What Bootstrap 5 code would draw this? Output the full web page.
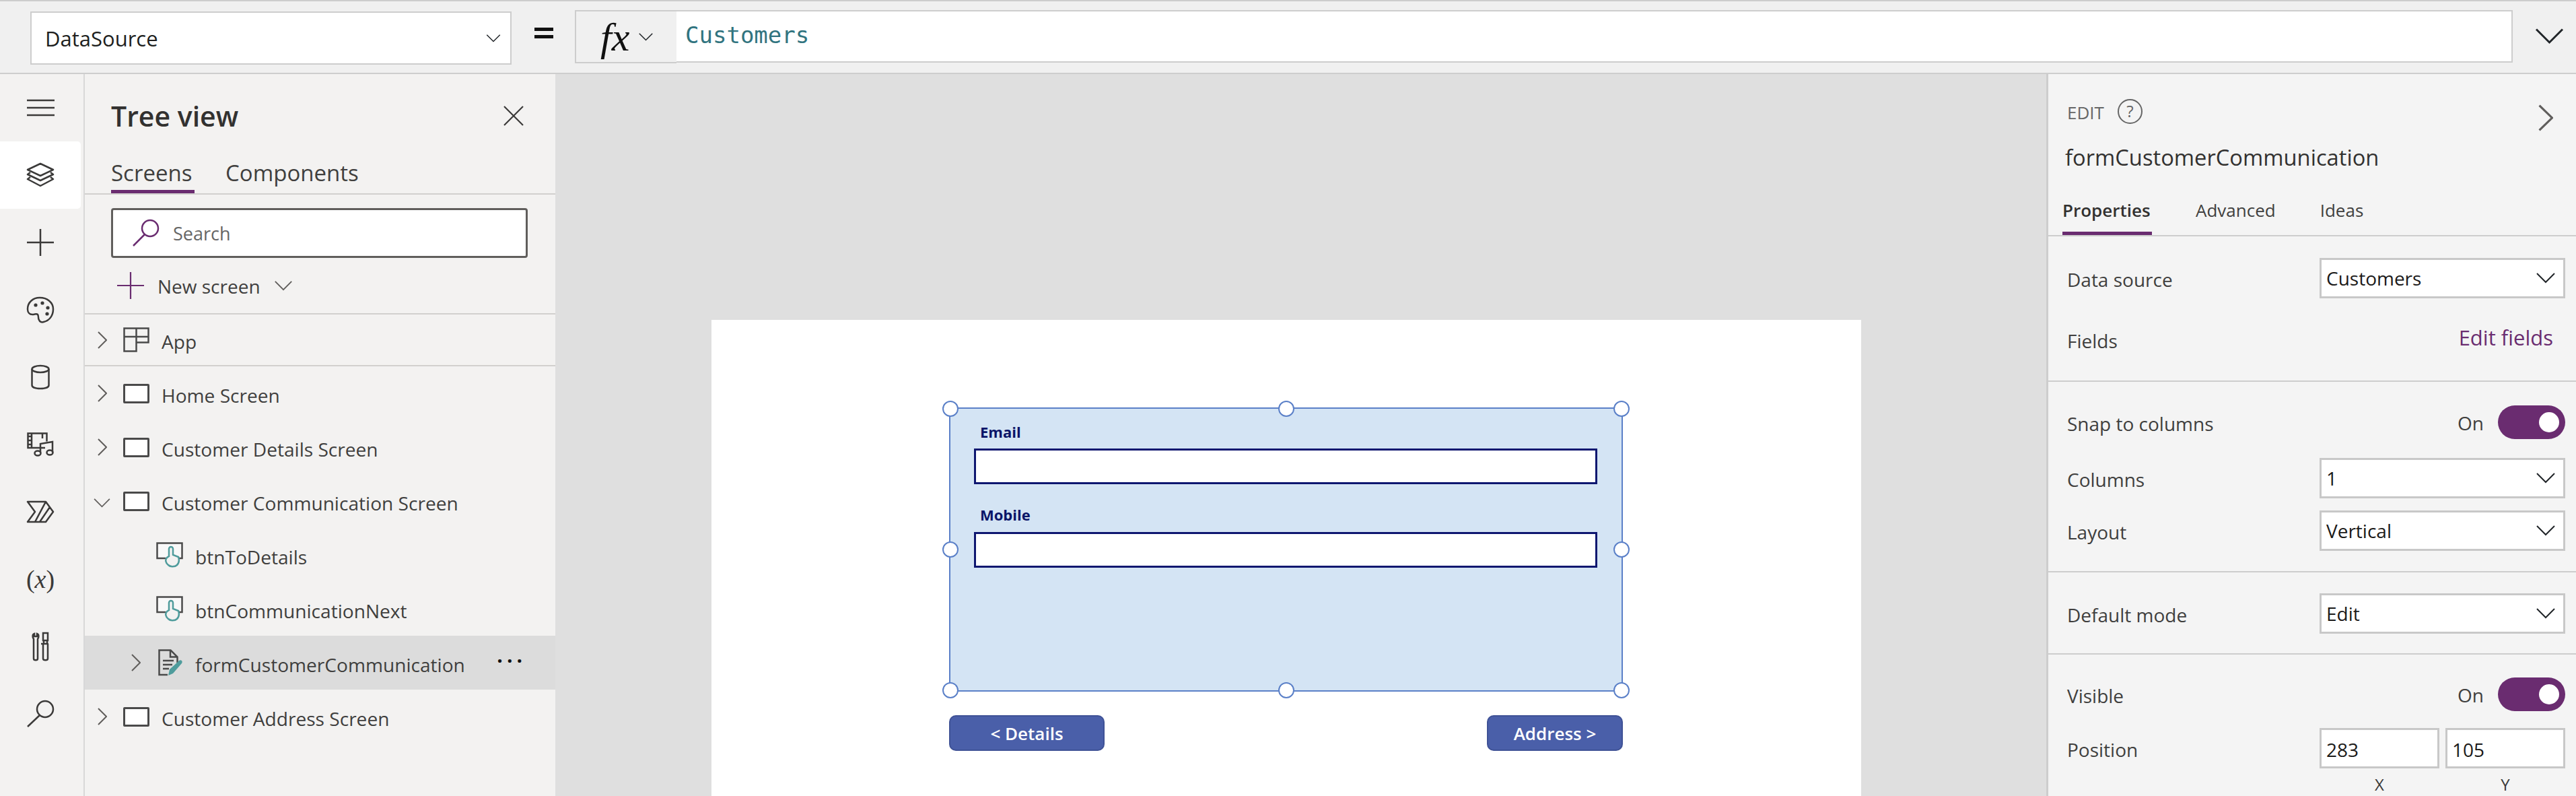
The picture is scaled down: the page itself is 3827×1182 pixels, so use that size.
<!DOCTYPE html>
<html lang="en">
<head>
<meta charset="UTF-8">
<title>Power Apps Studio</title>
<link href="https://cdn.jsdelivr.net/npm/bootstrap@5.3.0/dist/css/bootstrap.min.css" rel="stylesheet">
<style>
    html, body { height: 1182px; overflow: hidden; }
    body { font-family: "Open Sans", "Liberation Sans", sans-serif; color: #403f3e; font-size: 28px; line-height: 46px; background: #f3f2f1; }
    svg { display: block; flex: none; overflow: visible; }
    .ln { fill: none; stroke: #3b3a39; stroke-width: 2.5; }

    /* formula bar */
    .fbar { height: 110px; background: #f0f0f0; border-top: 2px solid #cdcdcd; border-bottom: 2px solid #cdcdcd; padding-left: 45px; }
    .prop-pick { width: 715px; height: 79px; margin-top: 15px; background: #fff; border: 2px solid #cdcdcd; padding: 0 10px 0 20px; font-size: 31px; color: #201f1e; }
    .eq-bars { width: 94px; margin-top: 39px; padding-left: 34px; }
    .eq-bars i { display: block; width: 28px; height: 5px; background: #111; margin-bottom: 6px; }
    .fx-btn { width: 151px; height: 79px; margin-top: 13px; border: 2px solid #cdcdcd; border-right: 0; padding-left: 36px; gap: 8px; }
    .fx-txt { font-family: "Liberation Serif", serif; font-style: italic; font-size: 60px; line-height: 60px; color: #111; width: 48px; }
    .fx-input { width: 2728px; height: 78px; margin-top: 13px; background: #fff; border: 2px solid #cdcdcd; border-left: 0; padding-left: 13px; font-family: "DejaVu Sans Mono", monospace; font-size: 34px; color: #31747f; line-height: 70px; }
    .fx-more { margin: 40px 0 0 32px; }

    /* left rail + tree */
    .workarea { height: 1072px; }
    .rail { width: 126px; border-right: 2px solid #d8d8d8; }
    .rail-item { width: 120px; height: 100px; }
    .rail-item.on { background: #fff; border-radius: 0 5px 5px 0; }
    .var-txt { font-family: "Liberation Serif", serif; font-size: 38px; color: #3b3a39; white-space: nowrap; line-height: 46px; }
    .tree { width: 699px; }
    .tree-head { height: 124px; padding: 0 47px 0 39px; }
    .tree-title { font-size: 41px; font-weight: 600; color: #323130; }
    .tab-row { height: 55px; padding-left: 39px; gap: 46px; border-bottom: 2px solid #d2d0ce; font-size: 33px; }
    .tab-on { height: 53px; border-bottom: 5px solid #6a2c70; font-weight: 500; width: 124px; white-space: nowrap; }
    .search-wrap { height: 74px; margin: 20px 41px 0 39px; }
    .search-wrap .form-control { height: 74px; border: 3px solid #605e5c; border-radius: 4px; padding-left: 89px; font-size: 27px; background: #fff; box-shadow: none; color: #323130; }
    .search-wrap .form-control::placeholder { color: #666; }
    .search-ic { left: 32px; top: 16px; }
    .new-row { height: 82px; padding-left: 48px; gap: 20px; font-size: 28px; }
    .new-row span { padding-top: 2px; }
    .tree-row { height: 80px; font-size: 28.1px; white-space: nowrap; }
    .tree-row > span:not(.cx):not(.ic-box):not(.dots) { padding-top: 5px; }
    .tree-row.cap { height: 79px; border-top: 2px solid #d2d0ce; border-bottom: 2px solid #d2d0ce; }
    .tree-row.sel { background: #dcdcdc; }
    .cx { width: 57px; padding-left: 19px; }
    .cx-open { width: 57px; padding-left: 13px; }
    .cx-sub { width: 40px; margin-left: 69px; }
    .ic-box { width: 39px; height: 29px; border: 3px solid #4a4a4a; border-radius: 2px; background: #fff; margin-right: 18px; }
    .ic-gap { margin-right: 18px; }
    .sub-gap { width: 106px; }
    .dots { font-size: 30px; letter-spacing: 6px; margin-left: auto; margin-right: 43px; line-height: 20px; margin-top: -22px; color: #111; font-weight: 700; }

    /* canvas */
    .stage { width: 2215px; background: #dfdfdf; padding: 365px 0 0 232px; }
    .screen-box { width: 1708px; height: 707px; background: #fff; padding: 130px 0 0 353px; }
    .frm-wrap { width: 1001px; height: 422px; background: #d4e4f4; border: 2px solid #5b80c8; padding: 19px 36px 0 35px; }
    .frm-label { font-size: 22px; font-weight: 700; color: #0b1568; line-height: 30px; padding-left: 9px; height: 30px; }
    .frm-input { height: 53px; background: #fff; border: 3px solid #0e1770; margin-top: 10px; margin-bottom: 30px; }
    .frm-input.b { margin-top: 11px; }
    .knob { width: 24px; height: 24px; border-radius: 50%; background: #fff; border: 2px solid #5b80c8; z-index: 2; }
    .btn-row { width: 1001px; margin-top: 35px; }
    .nav-btn { height: 53px; background: #4a5fa9; border: 2px solid #3f5296; border-radius: 10px; color: #fff; font-size: 26px; font-weight: 600; line-height: 46px; padding: 0; }
    .nav-btn:hover { background: #4a5fa9; color: #fff; border-color: #3f5296; }
    .btn-a { width: 231px; }
    .btn-b { width: 202px; }

    /* right panel */
    .side { width: 787px; background: #f4f4f4; border-left: 3px solid #cdcdcd; font-size: 28px; }
    .side-top { padding: 37px 34px 0 28px; height: 88px; }
    .edit-lbl { font-size: 26px; color: #666; gap: 20px; line-height: 37px; }
    .edit-lbl > span:first-child { padding-top: 2px; }
    .help-ic { width: 37px; height: 37px; border: 2px solid #666; border-radius: 50%; font-size: 24px; line-height: 32px; text-align: center; color: #666; }
    .side-name { font-size: 32.7px; padding-left: 25px; line-height: 46px; margin-top: 13px; height: 44px; color: #323130; white-space: nowrap; }
    .side-tabs { margin-top: 34px; padding-left: 21px; height: 62px; border-bottom: 2px solid #cdcdcd; font-size: 26px; }
    .s-tab { height: 60px; margin-right: 65px; white-space: nowrap; }
    .s-tab.on { font-weight: 600; border-bottom: 5px solid #6a2c70; width: 133px; color: #323130; }
    .s-tab.adv { margin-right: 66px; }
    .sect { border-bottom: 2px solid #cdcdcd; padding-left: 28px; padding-right: 16px; }
    .s1 { padding-top: 32px; height: 216px; }
    .s2 { padding-top: 35px; height: 283px; }
    .s3 { padding-top: 31px; height: 122px; }
    .s4 { padding-top: 34px; border-bottom: 0; }
    .prop-row { min-height: 60px; }
    .prop-row.t { min-height: 50px; }
    .prop-row > span { padding-top: 3px; }
    .sel-box { width: 365px; height: 60px; background: #fff; border: 3px solid #c8c8c8; padding: 0 12px 0 7px; color: #1b1a19; }
    .mt-f { margin-top: 31px; }
    .mt-c { margin-top: 28px; }
    .mt-l { margin-top: 18px; }
    .mt-p { margin-top: 25px; }
    .edit-link { color: #6a2c70; font-size: 31px; margin-right: 18px; margin-top: -6px; text-decoration: none; }
    .on-lbl { gap: 21px; }
    .on-lbl > span { padding-top: 2px; }
    .tgl { width: 100px; height: 50px; border-radius: 25px; background: #6a2c70; padding-right: 9px; }
    .tgl i { width: 30px; height: 30px; border-radius: 50%; background: #fff; display: block; }
    .pos-pair { width: 365px; }
    .pos-in { width: 178px; height: 60px; border: 3px solid #c8c8c8; border-radius: 0; padding: 3px 7px 0; font-size: 28px; color: #1b1a19; box-shadow: none; background: #fff; }
    .pos-lbl { width: 365px; margin-left: auto; font-size: 24px; line-height: 36px; margin-top: 6px; color: #3b3a39; }
    .pos-lbl span { width: 178px; text-align: center; }
    .chev-grey { color: #605e5c; }
</style>
</head>
<body>

<svg width="0" height="0" class="position-absolute">
    <symbol id="chev-r" viewBox="0 0 14 26"><path d="M1 1l12 12L1 25" fill="none" stroke="#605e5c" stroke-width="2"/></symbol>
    <symbol id="chev-d" viewBox="0 0 28 16"><path d="M1 1l13 13L27 1" fill="none" stroke="currentColor" stroke-width="2"/></symbol>
    <symbol id="btn-ic" viewBox="0 0 40 38">
        <path d="M14 24H1.500V1.500h37V24H34" fill="#f8f8f8" stroke="#4a4a4a" stroke-width="2.500"/>
        <path d="M19 22V10a3 3 0 0 1 6 0v9l8 3c2 6 0 10-2 12-3 3-10 3-13 0-4-3-5-8-2-11l3-2" fill="#f3f2f1" stroke="#4f9c9c" stroke-width="2.500"/>
    </symbol>
</svg>

<!-- formula bar -->
<div class="fbar d-flex">
    <div class="prop-pick d-flex align-items-center justify-content-between">
        <span>DataSource</span>
        <svg width="22" height="12" class="text-dark me-1"><use href="#chev-d"/></svg>
    </div>
    <div class="eq-bars"><i></i><i></i></div>
    <div class="fx-btn d-flex align-items-center">
        <span class="fx-txt">fx</span>
        <svg width="23" height="12" class="text-dark"><use href="#chev-d"/></svg>
    </div>
    <div class="fx-input">Customers</div>
    <svg class="fx-more text-dark" width="45" height="24"><use href="#chev-d"/></svg>
</div>

<div class="workarea d-flex">
    <!-- icon rail -->
    <div class="rail d-flex flex-column">
        <div class="rail-item d-flex align-items-center justify-content-center">
            <svg width="41" height="26" class="ln"><path d="M0 2h41M0 13h41M0 24h41"/></svg>
        </div>
        <div class="rail-item on d-flex align-items-center justify-content-center">
            <svg width="40" height="36" class="ln" stroke-linejoin="round"><path d="M20 1l19 9-19 9L1 10zM5 14l-4 3 19 9 19-9-4-3M5 21l-4 3 19 10 19-10-4-3"/></svg>
        </div>
        <div class="rail-item d-flex align-items-center justify-content-center">
            <svg width="40" height="40" class="ln"><path d="M0 20h40M20 0v40"/></svg>
        </div>
        <div class="rail-item d-flex align-items-center justify-content-center">
            <svg width="40" height="40" viewBox="0 0 40 40">
                <path class="ln" d="M19 2C9 2 1 9 1 19c0 5 3 8 7 8 4 0 6-2 8 0 2 3 0 5 2 8 1 3 4 4 7 3 9-2 14-10 14-19C39 9 30 2 19 2z"/>
                <circle cx="13" cy="13" r="2.600" fill="#3b3a39"/><circle cx="23" cy="10" r="2.600" fill="#3b3a39"/><circle cx="31" cy="17" r="2.600" fill="#3b3a39"/><circle cx="30" cy="26" r="2.600" fill="#3b3a39"/>
            </svg>
        </div>
        <div class="rail-item d-flex align-items-center justify-content-center">
            <svg width="28" height="36" class="ln"><ellipse cx="14" cy="6" rx="12.500" ry="5"/><path d="M1.500 6v24c0 3 5 5 12.500 5s12.500-2 12.500-5V6"/></svg>
        </div>
        <div class="rail-item d-flex align-items-center justify-content-center">
            <svg width="41" height="36" viewBox="0 0 41 36">
                <path class="ln" d="M27 23H1.500V1.500h28v12M7 1.500v21M7 6H1.500M7 12H1.500M7 18H1.500M23 1.500V9"/>
                <path class="ln" d="M20 30V17l18-3v16"/>
                <ellipse class="ln" cx="16" cy="31" rx="4.500" ry="3.500"/><ellipse class="ln" cx="34" cy="30" rx="4.500" ry="3.500"/>
            </svg>
        </div>
        <div class="rail-item d-flex align-items-center justify-content-center">
            <svg width="40" height="32" class="ln" stroke-linejoin="round"><path d="M1 1h27l11 15-11 15H1l11-15zM28 1L12 31M34 9L19 31"/></svg>
        </div>
        <div class="rail-item d-flex align-items-center justify-content-center">
            <span class="var-txt">(<i>x</i>)</span>
        </div>
        <div class="rail-item d-flex align-items-center justify-content-center">
            <svg width="26" height="42" class="ln"><path d="M3 10c-2-3-2-7 1-8v4h4V2c3 1 3 5 1 8v29c0 3-6 3-6 0zM17 12V1h7v11zM14 17h11M18 12v5h5v-5M17 17v22c0 3 7 3 7 0V17"/></svg>
        </div>
        <div class="rail-item d-flex align-items-center justify-content-center">
            <svg width="40" height="40" class="ln"><circle cx="27" cy="13" r="12"/><path d="M19 22L1 39"/></svg>
        </div>
    </div>

    <!-- tree view -->
    <div class="tree">
        <div class="tree-head d-flex align-items-center justify-content-between">
            <span class="tree-title">Tree view</span>
            <svg width="30" height="30"><path d="M1 1l28 28M29 1L1 29" stroke="#3b3a39" stroke-width="2.200" fill="none"/></svg>
        </div>
        <div class="tab-row d-flex">
            <div class="tab-on">Screens</div>
            <div>Components</div>
        </div>
        <div class="search-wrap position-relative">
            <input class="form-control" type="text" placeholder="Search">
            <svg class="search-ic position-absolute" width="40" height="40"><circle cx="26" cy="14" r="12" fill="none" stroke="#6a2c70" stroke-width="2.500"/><path d="M18 23L1 40" stroke="#6a2c70" stroke-width="2.500"/></svg>
        </div>
        <div class="new-row d-flex align-items-center">
            <svg width="40" height="40"><path d="M0 20h40M20 0v40" stroke="#6a2c70" stroke-width="2.200"/></svg>
            <span>New screen</span>
            <svg width="28" height="15" class="chev-grey"><use href="#chev-d"/></svg>
        </div>
        <div class="tree-row cap d-flex align-items-center">
            <span class="cx"><svg width="14" height="26"><use href="#chev-r"/></svg></span>
            <svg width="39" height="37" class="ic-gap" viewBox="0 0 39 37"><path d="M1.500 1.500h36v21h-18v13h-18zM1.500 14h36M19.500 1.500v21" fill="none" stroke="#4a4a4a" stroke-width="2.500"/></svg>
            <span>App</span>
        </div>
        <div class="tree-row d-flex align-items-center">
            <span class="cx"><svg width="14" height="26"><use href="#chev-r"/></svg></span>
            <span class="ic-box"></span><span>Home Screen</span>
        </div>
        <div class="tree-row d-flex align-items-center">
            <span class="cx"><svg width="14" height="26"><use href="#chev-r"/></svg></span>
            <span class="ic-box"></span><span>Customer Details Screen</span>
        </div>
        <div class="tree-row d-flex align-items-center">
            <span class="cx-open"><svg width="25" height="14" class="chev-grey"><use href="#chev-d"/></svg></span>
            <span class="ic-box"></span><span>Customer Communication Screen</span>
        </div>
        <div class="tree-row d-flex align-items-center">
            <div class="sub-gap"></div>
            <svg width="40" height="38" class="ic-gap"><use href="#btn-ic"/></svg>
            <span>btnToDetails</span>
        </div>
        <div class="tree-row d-flex align-items-center">
            <div class="sub-gap"></div>
            <svg width="40" height="38" class="ic-gap"><use href="#btn-ic"/></svg>
            <span>btnCommunicationNext</span>
        </div>
        <div class="tree-row sel d-flex align-items-center">
            <div class="cx-sub"><svg width="14" height="26"><use href="#chev-r"/></svg></div>
            <svg width="37" height="40" viewBox="0 0 37 40" class="ic-gap">
                <path d="M14 38H1.500V1.500h17l10 10V20M18 1.500v10h10" fill="none" stroke="#4a4a4a" stroke-width="2.500"/>
                <path d="M7 17h16M7 23h14M7 29h9" stroke="#4a4a4a" stroke-width="2.500"/>
                <path d="M15 39l2-9 14-13c3-2 6 1 4 4L22 36z" fill="#4f9c9c"/>
            </svg>
            <span>formCustomerCommunication</span>
            <span class="dots">...</span>
        </div>
        <div class="tree-row d-flex align-items-center">
            <span class="cx"><svg width="14" height="26"><use href="#chev-r"/></svg></span>
            <span class="ic-box"></span><span>Customer Address Screen</span>
        </div>
    </div>

    <!-- canvas -->
    <div class="stage">
        <div class="screen-box">
            <div class="frm-wrap position-relative">
                <span class="knob position-absolute top-0 start-0 translate-middle"></span>
                <span class="knob position-absolute top-0 start-50 translate-middle"></span>
                <span class="knob position-absolute top-0 start-100 translate-middle"></span>
                <span class="knob position-absolute top-50 start-0 translate-middle"></span>
                <span class="knob position-absolute top-50 start-100 translate-middle"></span>
                <span class="knob position-absolute top-100 start-0 translate-middle"></span>
                <span class="knob position-absolute top-100 start-50 translate-middle"></span>
                <span class="knob position-absolute top-100 start-100 translate-middle"></span>
                <div class="frm-label">Email</div>
                <div class="frm-input"></div>
                <div class="frm-label">Mobile</div>
                <div class="frm-input b"></div>
            </div>
            <div class="btn-row d-flex justify-content-between">
                <button class="btn nav-btn btn-a" type="button">&lt; Details</button>
                <button class="btn nav-btn btn-b" type="button">Address &gt;</button>
            </div>
        </div>
    </div>

    <!-- properties -->
    <div class="side">
        <div class="side-top d-flex justify-content-between align-items-start">
            <div class="edit-lbl d-flex">
                <span>EDIT</span>
                <span class="help-ic">?</span>
            </div>
            <svg width="22" height="40" class="mt-2" viewBox="0 0 14 26" preserveAspectRatio="none"><use href="#chev-r"/></svg>
        </div>
        <div class="side-name">formCustomerCommunication</div>
        <div class="side-tabs d-flex">
            <div class="s-tab on">Properties</div>
            <div class="s-tab adv">Advanced</div>
            <div class="s-tab">Ideas</div>
        </div>

        <div class="sect s1">
            <div class="prop-row d-flex align-items-center justify-content-between">
                <span>Data source</span>
                <div class="sel-box d-flex align-items-center justify-content-between"><div>Customers</div><svg width="28" height="16" class="text-dark"><use href="#chev-d"/></svg></div>
            </div>
            <div class="prop-row mt-f d-flex align-items-center justify-content-between">
                <span>Fields</span>
                <a class="edit-link" href="#">Edit fields</a>
            </div>
        </div>

        <div class="sect s2">
            <div class="prop-row t d-flex align-items-center justify-content-between">
                <span>Snap to columns</span>
                <div class="on-lbl d-flex align-items-center"><span>On</span><div class="tgl d-flex align-items-center justify-content-end"><i></i></div></div>
            </div>
            <div class="prop-row mt-c d-flex align-items-center justify-content-between">
                <span>Columns</span>
                <div class="sel-box d-flex align-items-center justify-content-between"><div>1</div><svg width="28" height="16" class="text-dark"><use href="#chev-d"/></svg></div>
            </div>
            <div class="prop-row mt-l d-flex align-items-center justify-content-between">
                <span>Layout</span>
                <div class="sel-box d-flex align-items-center justify-content-between"><div>Vertical</div><svg width="28" height="16" class="text-dark"><use href="#chev-d"/></svg></div>
            </div>
        </div>

        <div class="sect s3">
            <div class="prop-row d-flex align-items-center justify-content-between">
                <span>Default mode</span>
                <div class="sel-box d-flex align-items-center justify-content-between"><div>Edit</div><svg width="28" height="16" class="text-dark"><use href="#chev-d"/></svg></div>
            </div>
        </div>

        <div class="sect s4">
            <div class="prop-row t d-flex align-items-center justify-content-between">
                <span>Visible</span>
                <div class="on-lbl d-flex align-items-center"><span>On</span><div class="tgl d-flex align-items-center justify-content-end"><i></i></div></div>
            </div>
            <div class="prop-row mt-p d-flex align-items-center justify-content-between">
                <span>Position</span>
                <div class="pos-pair d-flex justify-content-between">
                    <input class="form-control pos-in" type="text" value="283">
                    <input class="form-control pos-in" type="text" value="105">
                </div>
            </div>
            <div class="pos-lbl d-flex justify-content-between"><span>X</span><span>Y</span></div>
        </div>
    </div>
</div>

</body>
</html>
